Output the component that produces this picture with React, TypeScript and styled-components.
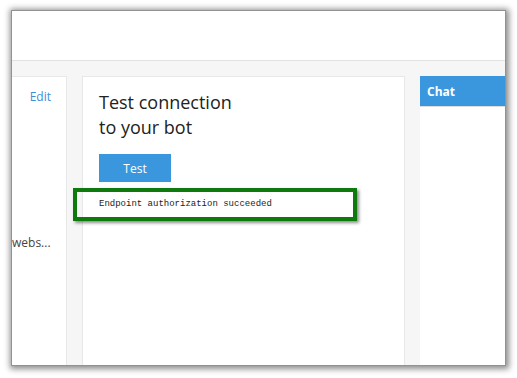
import React from "react";
import styled, { createGlobalStyle } from "styled-components";

const GlobalStyle = createGlobalStyle`
  html, body {
    margin: 0;
    padding: 0;
    background: #ffffff;
  }
  body {
    font-family: "Open Sans", "Noto Sans", sans-serif;
    color: #333;
  }
`;

const Page = styled.div`
  padding: 11px 12px 13px 12px;
`;

const Frame = styled.div`
  width: 493px;
  height: 354px;
  display: flex;
  flex-direction: column;
  overflow: hidden;
  background: #fff;
  box-shadow: 0 0 0 1px #929292, 1px 1px 6px 3px rgba(0, 0, 0, 0.45);
`;

const Header = styled.div`
  height: 49px;
  flex-shrink: 0;
  background: #fff;
  border-bottom: 1px solid #e2e2e2;
`;

const Workspace = styled.div`
  flex: 1;
  display: flex;
  gap: 15px;
  padding-top: 15px;
  background: #f6f6f6;
  min-height: 0;
`;

const Card = styled.div<{ width: number }>`
  width: ${({ width }) => width}px;
  flex-shrink: 0;
  background: #fff;
  border: 1px solid #e8e8e8;
  border-bottom: none;
  box-sizing: border-box;
`;

const SideCard = styled(Card)`
  border-left: none;
  display: flex;
  flex-direction: column;
`;

const EditLink = styled.a`
  align-self: flex-end;
  margin: 11px 15px 0 0;
  font-size: 12px;
  color: #3a8fd8;
  text-decoration: none;
  cursor: pointer;
`;

const Clipped = styled.div`
  margin-top: 129px;
  font-size: 12px;
  color: #444;
  white-space: nowrap;
`;

const MainCard = styled(Card)`
  padding: 13px 0 0 16px;
`;

const Title = styled.h2`
  margin: 0;
  font-size: 18px;
  font-weight: 400;
  line-height: 25px;
  color: #222;
`;

const Button = styled.button`
  margin-top: 14px;
  width: 72px;
  height: 28px;
  border: none;
  background: #3a97dd;
  color: #fff;
  font-family: inherit;
  font-size: 12px;
  cursor: pointer;
`;

const Status = styled.div`
  margin: 6px 0 0 -26px;
  width: 284px;
  height: 33px;
  box-sizing: border-box;
  border: 4px solid #0e7a0e;
  box-shadow: 2px 2px 3px rgba(0, 0, 0, 0.45);
  padding: 0 0 1px 22px;
  display: flex;
  align-items: center;
  font-family: "Liberation Mono", "DejaVu Sans Mono", monospace;
  font-size: 9px;
  color: #222;
`;

const ChatPanel = styled(Card)`
  border: none;
  display: flex;
  flex-direction: column;
`;

const ChatHeader = styled.div`
  height: 30px;
  background: #3a97dd;
  border-bottom: 1px solid #dcdcdc;
  color: #fff;
  font-size: 12px;
  font-weight: 700;
  padding-left: 7px;
  display: flex;
  align-items: center;
`;

export default function App() {
  return (
    <>
      <GlobalStyle />
      <Page>
        <Frame>
          <Header />
          <Workspace>
            <SideCard width={55}>
              <EditLink>Edit</EditLink>
              <Clipped>webs...</Clipped>
            </SideCard>
            <MainCard width={323}>
              <Title>
                Test connection
                <br />
                to your bot
              </Title>
              <Button>Test</Button>
              <Status>Endpoint authorization succeeded</Status>
            </MainCard>
            <ChatPanel width={85}>
              <ChatHeader>Chat</ChatHeader>
            </ChatPanel>
          </Workspace>
        </Frame>
      </Page>
    </>
  );
}
